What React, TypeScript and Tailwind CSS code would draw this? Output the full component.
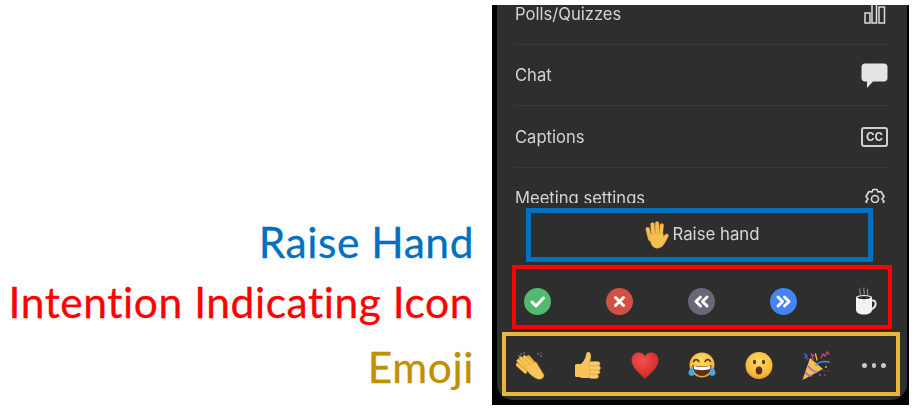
const Hand = () => (
  <svg width="25" height="28" viewBox="0 0 25 28" className="shrink-0">
    <g fill="#f5bf4f" stroke="#e3a236" strokeWidth="0.4">
      <rect x="2" y="6" width="3.8" height="14" rx="1.9" transform="rotate(-14 4 13)" />
      <rect x="6" y="1.5" width="3.8" height="15" rx="1.9" transform="rotate(-5 8 9)" />
      <rect x="10.2" y="0.5" width="3.8" height="16" rx="1.9" />
      <rect x="14.4" y="2.5" width="3.6" height="14" rx="1.8" transform="rotate(6 16 10)" />
      <path d="M4 13 L18 12 L18.5 15.5 C19.5 14 21 12.5 22.5 13 C24 13.8 23.5 15.5 22.5 17 C21 19.5 20 22 18 24.5 C15.5 27.5 11 28 8.5 26 C6 24 5 20 4 13 Z" />
    </g>
  </svg>
)

const CircleIcon = ({ bg, children }: { bg: string; children: React.ReactNode }) => (
  <svg width="27" height="27" viewBox="0 0 27 27" className="shrink-0">
    <circle cx="13.5" cy="13.5" r="13.5" fill={bg} />
    <g fill="none" stroke="#fff" strokeWidth="3" strokeLinecap="round" strokeLinejoin="round">
      {children}
    </g>
  </svg>
)

const Coffee = () => (
  <svg width="27" height="28" viewBox="0 0 27 28" className="shrink-0">
    <g fill="none" stroke="#8b8b8b" strokeWidth="1.2" strokeLinecap="round">
      <path d="M8 2 C6.5 4 9.5 5 8 7.5" />
      <path d="M12 1 C10.5 3.5 13.5 4.5 12 7" />
      <path d="M15.5 2.5 C14.5 4.5 16.5 5.5 15.5 7.5" />
    </g>
    <path d="M18 14 C25 11 26 20 18 23" fill="none" stroke="#e6e6e6" strokeWidth="2" />
    <path d="M4 10 H20 V22 C20 26 17 27.5 12 27.5 C7 27.5 4 26 4 22 Z" fill="#f2f2f2" />
    <ellipse cx="12" cy="10.5" rx="8" ry="2.4" fill="#f7f7f7" />
    <ellipse cx="12" cy="10.6" rx="6.6" ry="1.6" fill="#3a2417" />
  </svg>
)

const Clap = () => (
  <svg width="30" height="30" viewBox="0 0 30 30" className="shrink-0">
    <g fill="#6f6f6f">
      <circle cx="5" cy="3" r="1" />
      <circle cx="8" cy="2" r="1" />
      <circle cx="3" cy="5" r="0.9" />
      <circle cx="22" cy="3" r="0.9" />
      <circle cx="25" cy="5" r="0.9" />
      <circle cx="25" cy="2" r="0.8" />
    </g>
    <g fill="#eeb23e" stroke="#d18f25" strokeWidth="0.4">
      <g transform="rotate(-40 15 16)">
        <rect x="11" y="4" width="3.4" height="15" rx="1.7" />
        <rect x="14.5" y="3.5" width="3.4" height="15" rx="1.7" />
        <rect x="18" y="5" width="3.2" height="14" rx="1.6" />
      </g>
    </g>
    <g fill="#f6c65b" stroke="#d9982c" strokeWidth="0.4">
      <g transform="rotate(-48 12 16)">
        <rect x="5" y="5" width="3.4" height="14" rx="1.7" />
        <rect x="8.5" y="3" width="3.4" height="16" rx="1.7" />
        <rect x="12" y="3" width="3.4" height="16" rx="1.7" />
        <rect x="15.5" y="5" width="3.2" height="14" rx="1.6" />
      </g>
      <path d="M9 15 L20 11 L28 24 C28 27 25 29 22 28 C16 26 12 22 9 15 Z" />
    </g>
  </svg>
)

const ThumbUp = () => (
  <svg width="30" height="30" viewBox="0 0 30 30" className="shrink-0">
    <path
      d="M2 14.5 C2 13.5 3 13 4 13 H8 C10 11 12.5 8 13 4 C13.3 1.5 14.5 0.5 16 1 C18 1.8 18.2 4.5 17.8 7 L17 11 H24 V27 H10 C8.5 27 7.5 26.5 6.5 26 H4 C3 26 2 25.5 2 24.5 Z"
      fill="#f5c35a"
    />
    <g fill="#f7cd6c" stroke="#d8982e" strokeWidth="0.5">
      <rect x="16" y="10.5" width="11" height="4.4" rx="2.2" />
      <rect x="16.5" y="14.8" width="11" height="4.4" rx="2.2" />
      <rect x="16.5" y="19" width="10.5" height="4.2" rx="2.1" />
      <rect x="16" y="23.2" width="9.5" height="4.2" rx="2.1" />
    </g>
  </svg>
)

const Heart = () => (
  <svg width="30" height="30" viewBox="0 0 30 30" className="shrink-0">
    <defs>
      <radialGradient id="heartFill" cx="0.4" cy="0.3" r="0.8">
        <stop offset="0" stopColor="#f4524d" />
        <stop offset="1" stopColor="#c9201f" />
      </radialGradient>
    </defs>
    <path
      d="M15 28 C9 22 1.5 16.5 1.5 9 C1.5 4.5 5 1.5 8.5 1.5 C11.5 1.5 13.8 3 15 5.5 C16.2 3 18.5 1.5 21.5 1.5 C25 1.5 28.5 4.5 28.5 9 C28.5 16.5 21 22 15 28 Z"
      fill="url(#heartFill)"
    />
  </svg>
)

const FaceGradient = ({ id }: { id: string }) => (
  <defs>
    <radialGradient id={id} cx="0.5" cy="0.35" r="0.7">
      <stop offset="0" stopColor="#fddc6a" />
      <stop offset="0.7" stopColor="#f8b93c" />
      <stop offset="1" stopColor="#e8902a" />
    </radialGradient>
  </defs>
)

const Joy = () => (
  <svg width="30" height="30" viewBox="0 0 30 30" className="shrink-0">
    <FaceGradient id="joyFace" />
    <circle cx="15" cy="14" r="12.5" fill="url(#joyFace)" />
    <g fill="none" stroke="#5b3a1d" strokeWidth="1.6" strokeLinecap="round">
      <path d="M6.5 10.5 C8 8 10.5 8 12 10.5" />
      <path d="M18 10.5 C19.5 8 22 8 23.5 10.5" />
    </g>
    <path d="M5.5 14 C10 16 20 16 24.5 14 C24.5 21 20 25 15 25 C10 25 5.5 21 5.5 14 Z" fill="#5a2f1a" />
    <path d="M6.5 14.8 C11 16.4 19 16.4 23.5 14.8 L23 18 C19 19.5 11 19.5 7 18 Z" fill="#fff" />
    <g fill="#4aa6e8">
      <path d="M4.5 16 C7 19 8 21 7.5 23 C7 25 3.5 25.5 2 23.5 C0.5 21.5 2.5 18.5 4.5 16 Z" />
      <path d="M25.5 16 C23 19 22 21 22.5 23 C23 25 26.5 25.5 28 23.5 C29.5 21.5 27.5 18.5 25.5 16 Z" />
    </g>
  </svg>
)

const Hushed = () => (
  <svg width="30" height="30" viewBox="0 0 30 30" className="shrink-0">
    <FaceGradient id="hushedFace" />
    <circle cx="15" cy="14.5" r="13.5" fill="url(#hushedFace)" />
    <ellipse cx="10.5" cy="11" rx="1.6" ry="2.2" fill="#5b3a1d" />
    <ellipse cx="19.5" cy="11" rx="1.6" ry="2.2" fill="#5b3a1d" />
    <ellipse cx="15" cy="19.5" rx="3.3" ry="4" fill="#5a2f1a" />
  </svg>
)

const Party = () => (
  <svg width="32" height="30" viewBox="0 0 32 30" className="shrink-0">
    <path d="M1.5 29 L9 7 L22 18 Z" fill="#efc14b" />
    <g fill="none" stroke="#b56fd0" strokeWidth="1.8">
      <path d="M6.6 14.5 C9 18 12 20.5 16.5 21" />
      <path d="M4.3 21 C6 24 8 25 11 24.5" />
    </g>
    <g fill="none" strokeWidth="1.3" strokeLinecap="round">
      <path d="M12 9 L10.5 3 L13 5" stroke="#d6476a" />
      <path d="M3.5 3 L6 5 L4 6 L7 8" stroke="#3f6fd8" />
      <path d="M20 7 L22 3 L24 5 L26 1 L28 3" stroke="#d6476a" />
      <path d="M15 14 C18 11 23 10 28 11" stroke="#4a90e2" strokeWidth="1.6" />
      <path d="M14.5 3 L16 9" stroke="#e8c040" />
    </g>
    <g>
      <circle cx="25" cy="16" r="0.9" fill="#e8c040" />
      <circle cx="23" cy="20" r="0.8" fill="#3f6fd8" />
      <circle cx="27" cy="20" r="0.7" fill="#d6476a" />
      <circle cx="24" cy="24" r="0.8" fill="#d6476a" />
      <circle cx="19" cy="24" r="0.7" fill="#e8c040" />
    </g>
  </svg>
)

const rows = [
  {
    label: "Polls/Quizzes",
    icon: (
      <svg width="24" height="24" viewBox="0 0 24 24" fill="none" stroke="#dcdcdc" strokeWidth="1.5">
        <rect x="1" y="11" width="5" height="10" />
        <rect x="8" y="-4" width="4.5" height="25" />
        <rect x="15" y="5" width="5.5" height="16" />
      </svg>
    ),
  },
  {
    label: "Chat",
    icon: (
      <svg width="27" height="26" viewBox="0 0 27 26">
        <path
          d="M4 0.5 H23 C25 0.5 26.5 2 26.5 4 V15 C26.5 17 25 18.5 23 18.5 H12 L6 25 V18.5 H4 C2 18.5 0.5 17 0.5 15 V4 C0.5 2 2 0.5 4 0.5 Z"
          fill="#e4e4e4"
        />
      </svg>
    ),
  },
  {
    label: "Captions",
    icon: (
      <span className="flex h-[20px] w-[27px] items-center justify-center rounded-[3px] border-2 border-[#d0d0d0] text-[11.5px] leading-none font-bold text-[#dcdcdc]">
        CC
      </span>
    ),
  },
  {
    label: "Meeting settings",
    icon: (
      <svg width="24" height="22" viewBox="0 0 24 22" fill="none" stroke="#dcdcdc" strokeWidth="1.6" strokeLinejoin="round">
        <path d="M9 1.5 H13 L14 4 L17 3.5 L20 8.5 L18 11 L20 13.5 L17 18.5 L14 18 L13 20.5 H9 L8 18 L5 18.5 L2 13.5 L4 11 L2 8.5 L5 3.5 L8 4 Z" />
        <circle cx="11" cy="11" r="3.5" />
      </svg>
    ),
  },
]

export default function App() {
  return (
    <div className="flex h-[414px] w-[916px] overflow-hidden bg-white">
      <div className="flex w-[492px] flex-col items-end pt-[212px] pr-[18px] font-['Lato',sans-serif] text-[42.5px] leading-[60px] tracking-[0.55px] whitespace-nowrap [-webkit-text-stroke:0.3px_currentColor]">
        <div className="text-[#0070c0]">Raise Hand</div>
        <div className="text-[#ff0000]">Intention Indicating Icon</div>
        <div className="mt-[5px] text-[#bf9000]">Emoji</div>
      </div>

      <div className="mt-[5px] h-[400px] w-[417px] bg-black pr-[2px] pb-[5px] pl-[5px]">
        <div className="h-[395px] overflow-hidden rounded-b-[16px] bg-[#2e2e2e] font-['Inter',sans-serif]">
          <div className="mb-[5px] h-[198px] overflow-hidden blur-[0.4px]">
            <div className="-mt-[22px]">
              {rows.map((row) => (
                <div key={row.label} className="ml-[17px] flex h-[61.5px] w-[374px] items-center justify-between border-b border-[#383838] pt-[2px] text-[16.6px] text-[#d4d4d4]">
                  <span className="pl-[1px]">{row.label}</span>
                  {row.icon}
                </div>
              ))}
            </div>
          </div>

          <div className="ml-[29px] flex h-[54px] w-[347px] items-center justify-center gap-[2px] border-[5px] border-[#0070c0] pl-[6px] text-[16.8px] text-[#d8d8d8]">
            <Hand />
            <span className="blur-[0.3px]">Raise hand</span>
          </div>

          <div className="mt-[3px] ml-[15px] flex h-[64px] w-[380px] items-center gap-[55px] border-4 border-[#ff0000] pt-[8px] pl-[8px]">
            <CircleIcon bg="#52b96f">
              <path d="M8 14 L12 18 L19.5 10" />
            </CircleIcon>
            <CircleIcon bg="#cf5244">
              <path d="M9.5 9.5 L17.5 17.5 M17.5 9.5 L9.5 17.5" />
            </CircleIcon>
            <CircleIcon bg="#686878">
              <path d="M12.5 9 L8 13.5 L12.5 18 M19 9 L14.5 13.5 L19 18" />
            </CircleIcon>
            <CircleIcon bg="#4285f0">
              <path d="M8 9 L12.5 13.5 L8 18 M14.5 9 L19 13.5 L14.5 18" />
            </CircleIcon>
            <Coffee />
          </div>

          <div className="mt-[3px] ml-[5px] flex h-[64px] w-[398px] items-center gap-[27px] border-4 border-[#e9b63c] pt-[3px] pl-[10px]">
            <Clap />
            <ThumbUp />
            <Heart />
            <Joy />
            <Hushed />
            <Party />
            <span className="ml-[2px] flex gap-[5px]">
              <span className="h-[4.5px] w-[4.5px] rounded-full bg-[#c8c8c8]" />
              <span className="h-[4.5px] w-[4.5px] rounded-full bg-[#c8c8c8]" />
              <span className="h-[4.5px] w-[4.5px] rounded-full bg-[#c8c8c8]" />
            </span>
          </div>
        </div>
      </div>
    </div>
  )
}
